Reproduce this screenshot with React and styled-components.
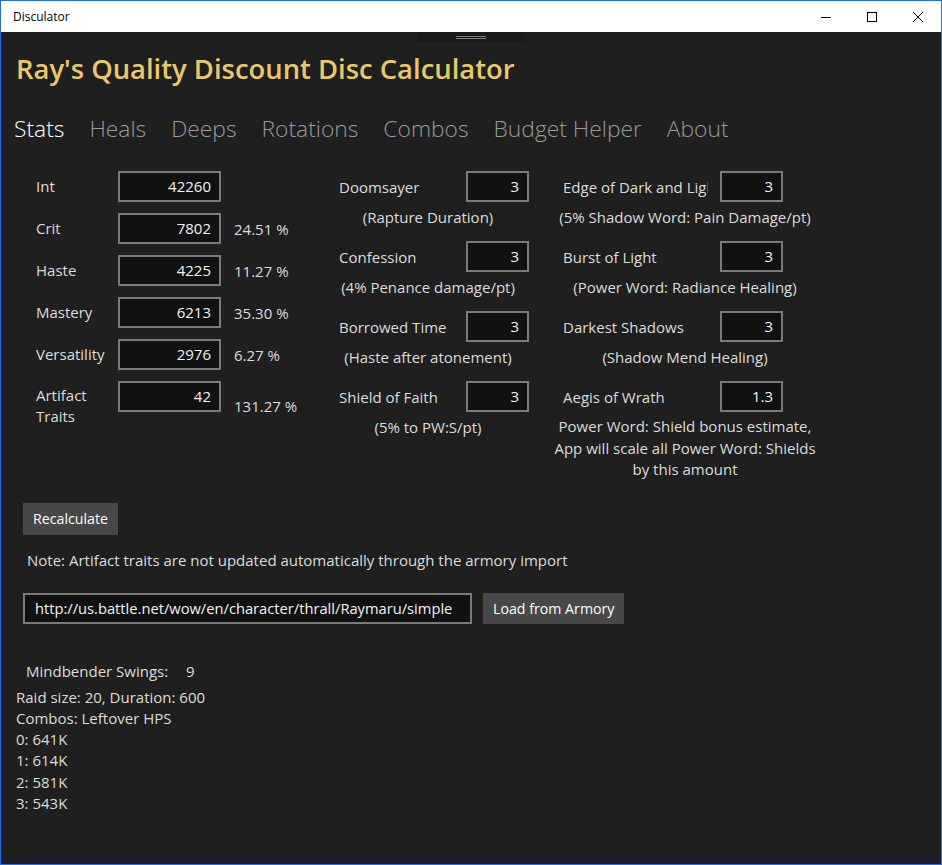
import React from 'react';
import styled, { createGlobalStyle } from 'styled-components';

const GlobalStyle = createGlobalStyle`
    html, body {
        margin: 0;
        padding: 0;
        background: #1f1f1f;
    }
    * {
        box-sizing: border-box;
    }
`;

const stats = [
    { label: 'Int', value: '42260', pct: '' },
    { label: 'Crit', value: '7802', pct: '24.51 %' },
    { label: 'Haste', value: '4225', pct: '11.27 %' },
    { label: 'Mastery', value: '6213', pct: '35.30 %' },
    { label: 'Versatility', value: '2976', pct: '6.27 %' },
    { label: 'Artifact Traits', value: '42', pct: '131.27 %', tall: true },
];

const leftTraits = [
    { label: 'Doomsayer', value: '3', note: '(Rapture Duration)' },
    { label: 'Confession', value: '3', note: '(4% Penance damage/pt)' },
    { label: 'Borrowed Time', value: '3', note: '(Haste after atonement)' },
    { label: 'Shield of Faith', value: '3', note: '(5% to PW:S/pt)' },
];

const rightTraits = [
    { label: 'Edge of Dark and Light', value: '3', note: '(5% Shadow Word: Pain Damage/pt)' },
    { label: 'Burst of Light', value: '3', note: '(Power Word: Radiance Healing)' },
    { label: 'Darkest Shadows', value: '3', note: '(Shadow Mend Healing)' },
    {
        label: 'Aegis of Wrath',
        value: '1.3',
        note: 'Power Word: Shield bonus estimate, App will scale all Power Word: Shields by this amount',
        wrap: true,
    },
];

const tabs = ['Stats', 'Heals', 'Deeps', 'Rotations', 'Combos', 'Budget Helper', 'About'];

const results = ['Raid size: 20, Duration: 600', 'Combos: Leftover HPS', '0: 641K', '1: 614K', '2: 581K', '3: 543K'];

const Window = styled.div`
    display: flex;
    flex-direction: column;
    height: 100vh;
    border: 1px solid #1f6df2;
    font-family: "Open Sans", "Noto Sans", sans-serif;
    font-size: 15px;
    color: #dcdcdc;
`;

const TitleBar = styled.div`
    display: flex;
    align-items: center;
    height: 31px;
    background: #fff;
    color: #000;
    font-size: 12px;
    padding-left: 12px;
`;

const TitleText = styled.span`
    flex: 1;
`;

const CaptionButton = styled.div`
    width: 46px;
    height: 31px;
    display: flex;
    align-items: center;
    justify-content: center;
`;

const Content = styled.div`
    position: relative;
    flex: 1;
    display: flex;
    flex-direction: column;
    background: #1f1f1f;
`;

const DragHandle = styled.div`
    position: absolute;
    top: 0;
    left: 416px;
    width: 107px;
    height: 10px;
    background: #1a1a1a;
    display: flex;
    flex-direction: column;
    align-items: center;
    justify-content: center;
    gap: 1px;

    span {
        display: block;
        width: 30px;
        height: 1px;
        background: #7c7c7c;
    }
`;

const AppTitle = styled.h1`
    margin: 19px 0 0 15px;
    font-size: 27.4px;
    line-height: 36px;
    font-weight: 600;
    color: #e7c96b;
`;

const TabBar = styled.div`
    display: flex;
    gap: 25px;
    margin: 26px 0 0 13px;
`;

const Tab = styled.div`
    font-size: 22.8px;
    line-height: 32px;
    font-weight: 300;
    color: ${(p) => (p.$active ? '#ffffff' : '#9a9a9a')};
`;

const Columns = styled.div`
    display: flex;
    margin: 26px 0 0 35px;
`;

const StatsGrid = styled.div`
    display: grid;
    grid-template-columns: 82px 103px auto;
    grid-auto-rows: minmax(31px, auto);
    row-gap: 11px;
    align-items: center;
    width: 303px;
    align-content: start;
`;

const Label = styled.div`
    line-height: 21px;
    padding: ${(p) => (p.$tall ? '4px 0' : '0')};
    max-width: ${(p) => (p.$tall ? '70px' : 'none')};
`;

const NumberBox = styled.div`
    width: ${(p) => p.$width || '103px'};
    height: 31px;
    align-self: start;
    background: #111111;
    border: 2px solid #7a7a7a;
    text-align: right;
    padding: 3px 8px 0 0;
    color: #f2f2f2;
    line-height: 21px;
`;

const Percent = styled.div`
    padding-left: 13px;
`;

const TraitColumn = styled.div`
    display: flex;
    flex-direction: column;
    width: ${(p) => p.$width};
    padding-left: ${(p) => p.$indent || '0px'};
`;

const TraitBlock = styled.div`
    display: flex;
    flex-direction: column;
    margin-bottom: 13px;
`;

const TraitRow = styled.div`
    display: flex;
    align-items: center;
    height: 31px;
`;

const TraitLabel = styled.div`
    width: ${(p) => p.$width};

    span {
        display: block;
        max-width: ${(p) => p.$clip || '100%'};
        white-space: nowrap;
        overflow: hidden;
    }
`;

const TraitNote = styled.div`
    display: flex;
    justify-content: center;
    width: ${(p) => p.$width};
    margin: 4px 0 0 ${(p) => p.$shift || '0px'};
    line-height: ${(p) => (p.$wrap ? '21.5px' : '22px')};
    text-align: center;
    white-space: ${(p) => (p.$wrap ? 'normal' : 'nowrap')};
`;

const Bottom = styled.div`
    display: flex;
    flex-direction: column;
    align-items: flex-start;
    padding-left: 22px;
`;

const Button = styled.button`
    height: ${(p) => p.$height || '32px'};
    padding: 0 10px;
    border: none;
    background: #484848;
    color: #ffffff;
    font-family: inherit;
    font-size: 14.2px;
    margin-top: ${(p) => p.$top || '0px'};
`;

const Note = styled.div`
    margin: 14px 0 0 4px;
    line-height: 22px;
`;

const ImportRow = styled.div`
    display: flex;
    gap: 11px;
    margin-top: 22px;
`;

const UrlBox = styled.div`
    width: 449px;
    height: 31px;
    background: #111111;
    border: 2px solid #7a7a7a;
    padding: 3px 0 0 10px;
    line-height: 21px;
    color: #f2f2f2;
    font-size: 14.7px;
    white-space: nowrap;
    overflow: hidden;
`;

const Swings = styled.div`
    display: flex;
    margin: 36px 0 0 3px;
    line-height: 22px;

    span:first-child {
        width: 160px;
    }
`;

const Results = styled.div`
    margin: 5px 0 0 15px;
    line-height: 21.33px;
`;

const TraitList = ({ items, width, labelWidth, labelClip, noteWidth, noteShift, indent }) => (
    <TraitColumn $width={width} $indent={indent}>
        {items.map((t) => (
            <TraitBlock key={t.label}>
                <TraitRow>
                    <TraitLabel $width={labelWidth} $clip={labelClip}>
                        <span>{t.label}</span>
                    </TraitLabel>
                    <NumberBox $width="63px">{t.value}</NumberBox>
                </TraitRow>
                <TraitNote $width={noteWidth} $shift={noteShift} $wrap={t.wrap}>
                    {t.note}
                </TraitNote>
            </TraitBlock>
        ))}
    </TraitColumn>
);

const App = () => {
    return (
        <Window>
            <GlobalStyle />
            <TitleBar>
                <TitleText>Disculator</TitleText>
                <CaptionButton>
                    <svg width="10" height="10" viewBox="0 0 10 10">
                        <path d="M0 5.5h10" stroke="#000" strokeWidth="1" />
                    </svg>
                </CaptionButton>
                <CaptionButton>
                    <svg width="10" height="10" viewBox="0 0 10 10">
                        <rect x="0.5" y="0.5" width="9" height="9" fill="none" stroke="#000" strokeWidth="1" />
                    </svg>
                </CaptionButton>
                <CaptionButton>
                    <svg width="10" height="10" viewBox="0 0 10 10">
                        <path d="M0 0L10 10M10 0L0 10" stroke="#000" strokeWidth="1" />
                    </svg>
                </CaptionButton>
            </TitleBar>
            <Content>
                <DragHandle>
                    <span />
                    <span />
                </DragHandle>
                <AppTitle>Ray's Quality Discount Disc Calculator</AppTitle>
                <TabBar>
                    {tabs.map((t, i) => (
                        <Tab key={t} $active={i === 0}>{t}</Tab>
                    ))}
                </TabBar>
                <Columns>
                    <StatsGrid>
                        {stats.map((s) => (
                            <React.Fragment key={s.label}>
                                <Label $tall={s.tall}>{s.label}</Label>
                                <NumberBox>{s.value}</NumberBox>
                                <Percent>{s.pct}</Percent>
                            </React.Fragment>
                        ))}
                    </StatsGrid>
                    <TraitList items={leftTraits} width="210px" labelWidth="127px" noteWidth="178px" />
                    <TraitList
                        items={rightTraits}
                        width="272px"
                        labelWidth="157px"
                        labelClip="145px"
                        noteWidth="272px"
                        noteShift="-14px"
                        indent="14px"
                    />
                </Columns>
                <Bottom>
                    <Button $top="9px">Recalculate</Button>
                    <Note>Note: Artifact traits are not updated automatically through the armory import</Note>
                    <ImportRow>
                        <UrlBox>http://us.battle.net/wow/en/character/thrall/Raymaru/simple</UrlBox>
                        <Button $height="31px">Load from Armory</Button>
                    </ImportRow>
                    <Swings>
                        <span>Mindbender Swings:</span>
                        <span>9</span>
                    </Swings>
                </Bottom>
                <Results>
                    {results.map((r) => (
                        <div key={r}>{r}</div>
                    ))}
                </Results>
            </Content>
        </Window>
    );
};

export default App;
